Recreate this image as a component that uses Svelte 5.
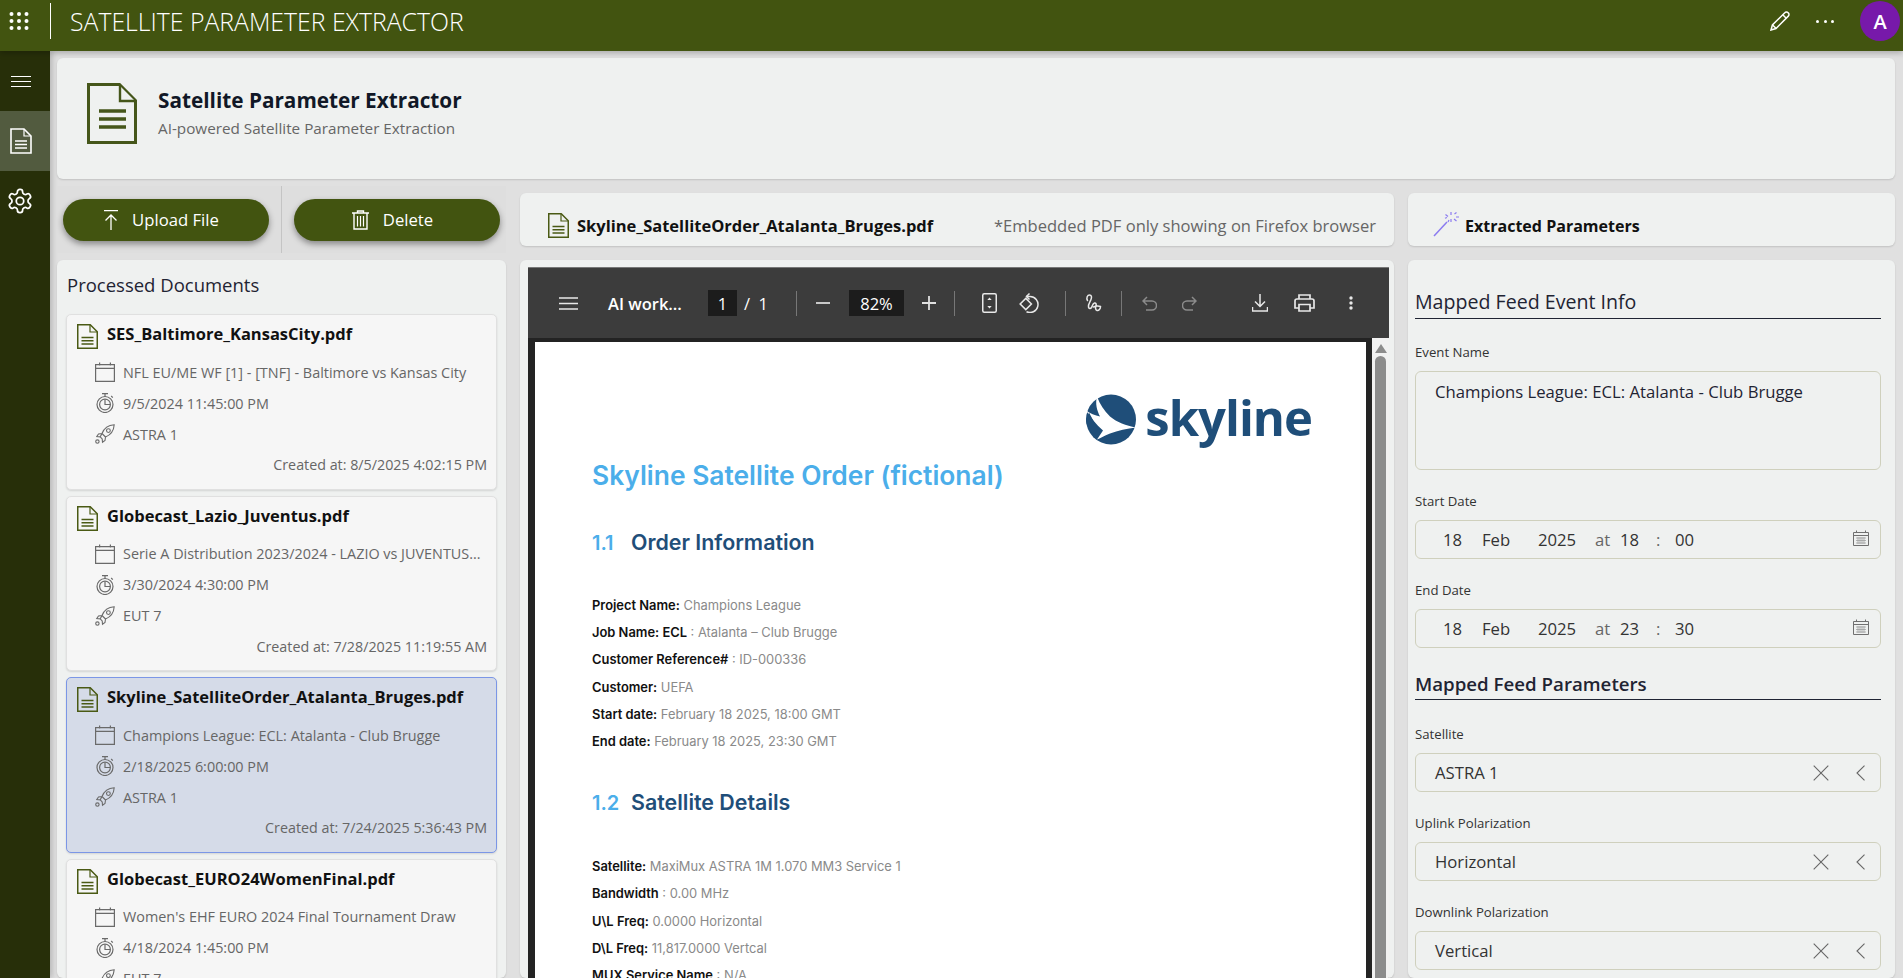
<script>
	const docs = [
		{ name: 'SES_Baltimore_KansasCity.pdf', event: 'NFL EU/ME WF [1] - [TNF] - Baltimore vs Kansas City', start: '9/5/2024 11:45:00 PM', sat: 'ASTRA 1', created: '8/5/2025 4:02:15 PM' },
		{ name: 'Globecast_Lazio_Juventus.pdf', event: 'Serie A Distribution 2023/2024 - LAZIO vs JUVENTUS...', start: '3/30/2024 4:30:00 PM', sat: 'EUT 7', created: '7/28/2025 11:19:55 AM' },
		{ name: 'Skyline_SatelliteOrder_Atalanta_Bruges.pdf', event: 'Champions League: ECL: Atalanta - Club Brugge', start: '2/18/2025 6:00:00 PM', sat: 'ASTRA 1', created: '7/24/2025 5:36:43 PM', selected: true },
		{ name: 'Globecast_EURO24WomenFinal.pdf', event: "Women's EHF EURO 2024 Final Tournament Draw", start: '4/18/2024 1:45:00 PM', sat: 'EUT 7' }
	];

	const orderInfo = [
		['Project Name:', 'Champions League'],
		['Job Name: ECL', ': Atalanta – Club Brugge'],
		['Customer Reference#', ': ID-000336'],
		['Customer:', 'UEFA'],
		['Start date:', 'February 18 2025, 18:00 GMT'],
		['End date:', 'February 18 2025, 23:30 GMT']
	];

	const satelliteDetails = [
		['Satellite:', 'MaxiMux ASTRA 1M 1.070 MM3 Service 1'],
		['Bandwidth', ': 0.00 MHz'],
		['U\\L Freq:', '0.0000 Horizontal'],
		['D\\L Freq:', '11,817.0000 Vertcal'],
		['MUX Service Name', ': N/A']
	];

	const startDate = { hour: '18', minute: '00' };
	const endDate = { hour: '23', minute: '30' };
	const selects = [
		{ label: 'Satellite', value: 'ASTRA 1' },
		{ label: 'Uplink Polarization', value: 'Horizontal' },
		{ label: 'Downlink Polarization', value: 'Vertical' }
	];
</script>

{#snippet fileIcon(cls)}
	<svg class={cls} viewBox="0 0 21 25" fill="none" stroke="currentColor">
		<path d="M.75.75h12.500l7 7v16.500H.75z" stroke-width="1.500" />
		<path d="M13 1v7h7" stroke-width="1.200" />
		<path d="M4.500 13.500h12M4.500 16.800h12M4.500 20h12" stroke-width="1.500" />
	</svg>
{/snippet}

{#snippet dateField(d)}
	<div class="field date">
		<span class="seg w-day">18</span>
		<span class="seg w-mon">Feb</span>
		<span class="seg w-year">2025</span>
		<span class="seg w-at">at</span>
		<span class="seg w-hour">{d.hour}</span>
		<span class="seg w-colon">:</span>
		<span class="seg">{d.minute}</span>
		<svg class="cal" viewBox="0 0 16 16" fill="none" stroke="#707070">
			<path d="M.5 2.500h15v13H.5zM.5 5.500h15M3.500 .5v2M12.500 .5v2" />
			<path d="M3 8h10M3 10.500h10M3 13h10M5 7v7M7 7v7M9 7v7M11 7v7" stroke-width=".7" stroke="#999" />
		</svg>
	</div>
{/snippet}

<div class="app">
	<header class="topbar">
		<svg class="waffle" viewBox="0 0 20 18" fill="#fff">
			{#each [2, 9, 16] as y}
				{#each [2.5, 10, 17.5] as x}
					<circle cx={x} cy={y} r="2" />
				{/each}
			{/each}
		</svg>
		<span class="topbar-sep"></span>
		<span class="app-name">SATELLITE PARAMETER EXTRACTOR</span>
		<svg class="pencil" viewBox="0 0 20 20" fill="none" stroke="#fff" stroke-width="1.500">
			<path d="M1 19l1.400-5L14.800 1.700a2.200 2.200 0 0 1 3.300 0l.2.2a2.200 2.200 0 0 1 0 3.200L6 17.500z" />
			<path d="M12.800 3.800l3.400 3.400M2.600 14l3.300 3.300" />
		</svg>
		<span class="more"><i></i><i></i><i></i></span>
		<span class="avatar">A</span>
	</header>

	<div class="body">
		<nav class="sidebar">
			<div class="nav-item menu">
				<svg width="20" height="11" viewBox="0 0 20 11" stroke="#fff"><path d="M0 .5h20M0 5.500h20M0 10.500h20" /></svg>
			</div>
			<div class="nav-item active">
				<svg width="22" height="26" viewBox="0 0 22 26" fill="none" stroke="#fff">
					<path d="M1 1h13l7 7v17H1z" stroke-width="1.600" />
					<path d="M14 1v7h7" stroke-width="1.200" />
					<path d="M5 13h12M5 16.500h12M5 20h12" stroke-width="1.500" />
				</svg>
			</div>
			<div class="nav-item gear">
				<svg width="28" height="28" viewBox="0 0 24 24" fill="none" stroke="#fff" stroke-width="1.500">
					<path d="M12.220 2h-.44a2 2 0 0 0-2 2v.18a2 2 0 0 1-1 1.730l-.43.25a2 2 0 0 1-2 0l-.15-.08a2 2 0 0 0-2.730.73l-.22.38a2 2 0 0 0 .73 2.730l.15.1a2 2 0 0 1 1 1.720v.51a2 2 0 0 1-1 1.740l-.15.09a2 2 0 0 0-.73 2.730l.22.38a2 2 0 0 0 2.730.73l.15-.08a2 2 0 0 1 2 0l.43.25a2 2 0 0 1 1 1.730V20a2 2 0 0 0 2 2h.44a2 2 0 0 0 2-2v-.18a2 2 0 0 1 1-1.730l.43-.25a2 2 0 0 1 2 0l.15.08a2 2 0 0 0 2.730-.73l.22-.39a2 2 0 0 0-.73-2.730l-.15-.08a2 2 0 0 1-1-1.740v-.5a2 2 0 0 1 1-1.740l.15-.09a2 2 0 0 0 .73-2.730l-.22-.38a2 2 0 0 0-2.730-.73l-.15.08a2 2 0 0 1-2 0l-.43-.25a2 2 0 0 1-1-1.730V4a2 2 0 0 0-2-2z" />
					<circle cx="12" cy="12" r="3.200" />
				</svg>
			</div>
		</nav>

		<main class="content">
			<section class="card hero">
				<svg class="hero-icon" viewBox="0 0 50 61" fill="none" stroke="#45561a">
					<path d="M1.500 1.500h31l16 16v42h-47z" stroke-width="3" />
					<path d="M33 3v15h15" stroke-width="2.400" fill="#eff1f0" />
					<path d="M12 28h27M12 36h27M12 44h27" stroke-width="3.400" />
				</svg>
				<div>
					<h1>Satellite Parameter Extractor</h1>
					<p>AI-powered Satellite Parameter Extraction</p>
				</div>
			</section>

			<div class="columns">
				<div class="col left">
					<div class="actions">
						<button class="pill">
							<svg width="14" height="20" viewBox="0 0 14 20" fill="none" stroke="#fff" stroke-width="1.300"><path d="M0 .7h14M7 20V5M1.500 10.500L7 5l5.500 5.500" /></svg>
							Upload File
						</button>
						<span class="action-sep"></span>
						<button class="pill">
							<svg width="17" height="20" viewBox="0 0 17 20" fill="none" stroke="#fff" stroke-width="1.400"><path d="M0 3h17M5.500 3V1h6v2M2 3v16h13V3" /><path d="M5.500 6v10.500M8.500 6v10.500M11.500 6v10.500" stroke-width="1.200" /></svg>
							Delete
						</button>
					</div>
					<section class="card docs">
						<h2>Processed Documents</h2>
						<div class="doc-list">
							{#each docs as doc}
								<article class="doc" class:selected={doc.selected}>
									<div class="doc-title">
										{@render fileIcon('file-sm')}
										<span>{doc.name}</span>
									</div>
									<div class="doc-row">
										<svg class="row-icon" viewBox="0 0 20 20" fill="none" stroke="#6a6a6a" stroke-width="1.200"><path d="M.6 2.600h18.800v16.800H.6zM.6 6.400h18.800M4.600 .4v3M15.400 .4v3" /></svg>
										<span>{doc.event}</span>
									</div>
									<div class="doc-row">
										<svg class="row-icon" viewBox="0 0 20 20" fill="none" stroke="#6a6a6a" stroke-width="1.200"><circle cx="10" cy="11.500" r="8" /><circle cx="10" cy="11.500" r="5.400" /><path d="M10 6.500v5h5M7 .7h6M10 .7v3M16.200 3l1.600 1.600" /></svg>
										<span>{doc.start}</span>
									</div>
									<div class="doc-row">
										<svg class="row-icon" viewBox="0 0 20 20" fill="none" stroke="#6a6a6a" stroke-width="1.100"><path d="M7 9.500C9 4.500 13 1.200 19.200.8c-.4 6.200-3.700 10.200-8.700 12.200zM7 9.500L3.500 10 1.800 12.500l3.400.3zM10.500 13l-.5 3.500-2.500 1.700-.3-3.400M5.200 12.800l2 2" /><circle cx="13.400" cy="6.600" r="1.900" /><circle cx="2.400" cy="17.600" r="1.700" /></svg>
										<span>{doc.sat}</span>
									</div>
									{#if doc.created}
										<div class="doc-created">Created at: {doc.created}</div>
									{/if}
								</article>
							{/each}
						</div>
					</section>
				</div>

				<div class="col middle">
					<section class="card strip">
						{@render fileIcon('file-sm')}
						<strong>Skyline_SatelliteOrder_Atalanta_Bruges.pdf</strong>
						<span class="note">*Embedded PDF only showing on Firefox browser</span>
					</section>
					<section class="card viewer">
						<div class="pdf-toolbar">
							<svg class="t-menu" width="19" height="13" viewBox="0 0 19 13" stroke="#e8e8e8" stroke-width="1.600"><path d="M0 1h19M0 6.500h19M0 12h19" /></svg>
							<span class="pdf-title">AI work...</span>
							<span class="pdf-box page">1</span>
							<span class="pdf-of">/&nbsp;&nbsp;1</span>
							<i class="t-sep s1"></i>
							<svg class="t-minus" width="14" height="2" viewBox="0 0 14 2" stroke="#c8c8c8" stroke-width="2"><path d="M0 1h14" /></svg>
							<span class="pdf-box zoom">82%</span>
							<svg class="t-plus" width="14" height="14" viewBox="0 0 14 14" stroke="#e0e0e0" stroke-width="1.800"><path d="M0 7h14M7 0v14" /></svg>
							<i class="t-sep s2"></i>
							<svg class="t-fit" width="15" height="20" viewBox="0 0 15 20" fill="none" stroke="#e8e8e8" stroke-width="1.500"><rect x=".75" y=".75" width="13.500" height="18.500" rx="1.500" /><path d="M7.500 4.500l-2.200 2.500h4.400zM7.500 15.500l-2.200-2.500h4.400z" fill="#e8e8e8" stroke="none" /></svg>
							<svg class="t-rotate" width="21" height="20" viewBox="0 0 21 20" fill="none" stroke="#e8e8e8" stroke-width="1.500"><path d="M7 3.500h4a8 8 0 1 1-3.500 15.200" /><path d="M10.500.5L7.500 3.500l3 3" /><rect x="2.800" y="7" width="8" height="8" transform="rotate(45 6.800 11)" /></svg>
							<i class="t-sep s3"></i>
							<svg class="t-draw" width="18" height="18" viewBox="0 0 18 18" fill="none" stroke="#e8e8e8" stroke-width="1.500" stroke-linecap="round"><path d="M2.500 6.500C1 4 2.500 1 4.500 1S7 3 6 5.500 3 10.500 3.500 13c.4 1.800 2 2 3 .5s1-4 3-4.500c1.500-.3 2 1 1.500 2.500s-1 4.500 1 5c1.800.4 3.500-1.500 3.500-4-2-.8-5-.5-7 .5" /></svg>
							<i class="t-sep s4"></i>
							<svg class="t-undo" width="15" height="15" viewBox="0 0 15 15" fill="none" stroke="#8b8b8b" stroke-width="1.500"><path d="M5 1L1 5l4 4M1 5h9a4 4 0 0 1 0 9H4" /></svg>
							<svg class="t-redo" width="15" height="15" viewBox="0 0 15 15" fill="none" stroke="#8b8b8b" stroke-width="1.500"><path d="M10 1l4 4-4 4M14 5H5a4 4 0 0 0 0 9h6" /></svg>
							<svg class="t-down" width="16" height="18" viewBox="0 0 16 18" fill="none" stroke="#e8e8e8" stroke-width="1.500"><path d="M8 0v12M3 7.500l5 5 5-5M.5 13v4h15v-4" /></svg>
							<svg class="t-print" width="21" height="18" viewBox="0 0 21 18" fill="none" stroke="#e8e8e8" stroke-width="1.700"><path d="M5 5V1h11v4M5 14H1V7a2 2 0 0 1 2-2h15a2 2 0 0 1 2 2v7h-4" /><path d="M5 10.500h11v6.500H5z" /></svg>
							<svg class="t-dots" width="4" height="14" viewBox="0 0 4 14" fill="#e8e8e8"><circle cx="2" cy="2" r="1.700" /><circle cx="2" cy="7" r="1.700" /><circle cx="2" cy="12" r="1.700" /></svg>
						</div>
						<div class="pdf-body">
							<div class="page-sheet">
								<div class="logo">
									<svg width="50" height="51" viewBox="0 0 50 50">
										<circle cx="25" cy="25" r="25" fill="#1f4e79" />
										<path d="M11 2c3 8 7 14 13 20 7 6 16 9 26 11-9 1-18 3-26 6-6 2-10 5-13 6l6-9C10 30 4 22 0 16c4 3 9 5 14 6C11 16 9 9 11 2z" fill="#fff" />
										<path d="M3 18l9 17-4 5C3 35 0 30 0 25z" fill="#1f4e79" />
									</svg>
									<span>skyline</span>
								</div>
								<h3 class="pdf-h1">Skyline Satellite Order (fictional)</h3>
								<h4 class="pdf-h2 first"><span>1.1</span>Order Information</h4>
								{#each orderInfo as row}
									<p class="pdf-line"><b>{row[0]}</b> {row[1]}</p>
								{/each}
								<h4 class="pdf-h2 second"><span>1.2</span>Satellite Details</h4>
								{#each satelliteDetails as row}
									<p class="pdf-line"><b>{row[0]}</b> {row[1]}</p>
								{/each}
							</div>
							<div class="pdf-scroll">
								<i class="arrow"></i>
								<i class="thumb"></i>
							</div>
						</div>
					</section>
				</div>

				<div class="col right">
					<section class="card strip params">
						<svg class="wand" width="27" height="26" viewBox="0 0 27 26" fill="none" stroke="#8b7bf0" stroke-width="1.200">
							<path d="M1 25L14 11" stroke-width="1.500" />
							<path d="M18 1v3M18 8v3M12.500 3.500l2.500 2M21 8l2.500 2M26 6h-3M14 6.500l-2 .8M21.500 3l2-1.500M16 9l-1 2" />
						</svg>
						<strong>Extracted Parameters</strong>
					</section>
					<section class="card form">
						<h3 class="form-head first">Mapped Feed Event Info</h3>
						<div class="label">Event Name</div>
						<div class="field area">Champions League: ECL: Atalanta - Club Brugge</div>
						<div class="label">Start Date</div>
						{@render dateField(startDate)}
						<div class="label">End Date</div>
						{@render dateField(endDate)}
						<h3 class="form-head bold">Mapped Feed Parameters</h3>
						{#each selects as s}
							<div class="label">{s.label}</div>
							<div class="field select">
								<span>{s.value}</span>
								<svg class="x" width="16" height="16" viewBox="0 0 16 16" stroke="#666" stroke-width="1.100"><path d="M.7 .7l14.600 14.600M15.300 .7L.7 15.300" /></svg>
								<svg class="chev" width="9" height="16" viewBox="0 0 9 16" fill="none" stroke="#666" stroke-width="1.100"><path d="M8.500 .7L1 8l7.500 7.300" /></svg>
							</div>
						{/each}
					</section>
				</div>
			</div>
		</main>
	</div>
</div>

<style>
	:global(body) {
		margin: 0;
		background: #e0e0e0;
		overflow: hidden;
	}

	.app {
		width: 1903px;
		height: 978px;
		overflow: hidden;
		display: flex;
		flex-direction: column;
		font-family: 'Open Sans', 'Noto Sans', sans-serif;
		color: #1a1a1a;
	}

	.topbar {
		height: 51px;
		flex: none;
		background: #425410;
		display: flex;
		align-items: flex-start;
		padding-right: 3px;
		box-sizing: border-box;
		position: relative;
		z-index: 2;
		box-shadow: 0 2px 6px rgba(0, 0, 0, 0.25);
	}

	.waffle {
		width: 20px;
		height: 18px;
		margin: 12px 0 0 9px;
	}

	.topbar-sep {
		width: 1px;
		height: 36px;
		background: #fff;
		margin: 3px 0 0 21px;
	}

	.app-name {
		margin: 7px 0 0 19px;
		font-size: 24.800px;
		line-height: 28px;
		font-weight: 300;
		color: #fff;
		flex: 1;
	}

	.pencil {
		width: 20px;
		height: 20px;
		margin-top: 11px;
	}

	.more {
		display: flex;
		gap: 4.500px;
		margin: 20px 0 0 26px;
	}

	.more i {
		width: 3px;
		height: 3px;
		background: #fff;
		border-radius: 50%;
	}

	.avatar {
		width: 40px;
		height: 40px;
		border-radius: 50%;
		background: #7719aa;
		color: #fff;
		font-size: 20px;
		font-weight: 600;
		display: flex;
		align-items: center;
		justify-content: center;
		margin: 1px 0 0 26px;
	}

	.body {
		flex: 1;
		display: flex;
		min-height: 0;
	}

	.sidebar {
		width: 50px;
		flex: none;
		background: #272f09;
		box-shadow: 2px 0 6px rgba(0, 0, 0, 0.2);
	}

	.nav-item {
		height: 60px;
		display: flex;
		align-items: center;
		justify-content: center;
		box-sizing: border-box;
	}

	.menu {
		padding-right: 8px;
	}

	.active {
		background: #525b3f;
		padding-right: 8px;
	}

	.gear {
		padding-right: 11px;
	}

	.content {
		flex: 1;
		min-width: 0;
		padding: 7px 8px 0 7px;
	}

	.card {
		background: #eff1f0;
		border-radius: 6px;
		box-shadow: 0 1px 2px rgba(0, 0, 0, 0.14);
	}

	.hero {
		height: 121px;
		display: flex;
		align-items: flex-start;
		padding: 25px 0 0 30px;
		box-sizing: border-box;
		gap: 21px;
	}

	.hero-icon {
		width: 50px;
		height: 61px;
		flex: none;
	}

	h1 {
		margin: 4px 0 0;
		font-size: 20.750px;
		line-height: 27px;
		font-weight: 700;
		color: #111827;
	}

	.hero p {
		margin: 4px 0 0;
		font-size: 15.250px;
		line-height: 20px;
		color: #666;
	}

	.columns {
		display: grid;
		grid-template-columns: 449px 874px 487px;
		column-gap: 14px;
		height: 799px;
	}

	.col {
		display: flex;
		flex-direction: column;
		min-width: 0;
		min-height: 0;
	}

	.actions {
		height: 67px;
		margin: 7px 0 7px;
		display: flex;
		align-items: center;
		padding: 0 6px;
		flex: none;
		background: #dedede;
	}

	.pill {
		width: 206px;
		height: 42px;
		border: 0;
		border-radius: 21px;
		background: #425410;
		color: #fff;
		font: 400 16.700px 'Open Sans', sans-serif;
		display: flex;
		align-items: center;
		justify-content: center;
		gap: 14px;
		box-shadow: 0 3px 6px rgba(0, 0, 0, 0.4);
		padding: 0 9px 0 0;
	}

	.action-sep {
		width: 1px;
		height: 67px;
		background: #c4c4c4;
		margin: 0 12px;
	}

	.docs {
		flex: 1;
		padding: 0 9px;
		min-height: 0;
		overflow: hidden;
	}

	h2 {
		margin: 12px 0 0 1px;
		font-size: 18.500px;
		line-height: 26px;
		font-weight: 400;
		color: #1f2433;
	}

	.doc-list {
		display: flex;
		flex-direction: column;
		gap: 6px;
		margin-top: 16px;
	}

	.doc {
		height: 175.500px;
		box-sizing: border-box;
		background: #f6f6f6;
		border: 1px solid #e0e0e0;
		border-radius: 5px;
		box-shadow: 0 1px 2px rgba(0, 0, 0, 0.12);
		padding: 9px 9px 0 10px;
		flex: none;
	}

	.doc.selected {
		background: #d5dbe8;
		border-color: #7b96e6;
	}

	.doc-title {
		display: flex;
		align-items: flex-start;
		gap: 9px;
		height: 32.500px;
		font-size: 16.500px;
		line-height: 20px;
		font-weight: 700;
		color: #111;
		white-space: nowrap;
	}

	:global(.file-sm) {
		width: 21px;
		height: 25px;
		flex: none;
		color: #4a5a14;
	}

	.doc-row {
		height: 31px;
		display: flex;
		align-items: center;
		gap: 8px;
		padding-left: 18px;
		font-size: 14.400px;
		color: #666;
		white-space: nowrap;
	}

	.row-icon {
		width: 20px;
		height: 20px;
		flex: none;
	}

	.doc-created {
		margin-top: 5.500px;
		text-align: right;
		font-size: 14.300px;
		line-height: 20px;
		color: #666;
	}

	.strip {
		height: 53px;
		margin-top: 14px;
		flex: none;
		display: flex;
		align-items: center;
		padding: 12px 0 0 28px;
		box-sizing: border-box;
		gap: 8px;
	}

	.strip strong {
		font-size: 16.500px;
		font-weight: 700;
		color: #111;
		white-space: nowrap;
	}

	.note {
		margin-left: auto;
		margin-right: 18px;
		font-size: 16.550px;
		color: #666;
		white-space: nowrap;
	}

	.viewer {
		flex: 1;
		margin-top: 14px;
		padding: 7px 5px 0 8px;
		min-height: 0;
		display: flex;
		flex-direction: column;
		overflow: hidden;
	}

	.pdf-toolbar {
		height: 71px;
		flex: none;
		background: #3c3c3c;
		border-top: 1px solid #777;
		box-sizing: border-box;
		display: flex;
		align-items: center;
		padding-left: 31px;
		color: #fff;
	}

	.pdf-title {
		margin-left: 30px;
		width: 100px;
		font-size: 16.500px;
		font-weight: 600;
		white-space: nowrap;
	}

	.pdf-box {
		background: #1c1c1c;
		height: 26px;
		display: flex;
		align-items: center;
		justify-content: center;
		font-size: 16.500px;
	}

	.page {
		width: 29px;
	}

	.pdf-of {
		margin-left: 7px;
		width: 52px;
		font-size: 16.500px;
	}

	.zoom {
		width: 55px;
		margin-left: 19px;
	}

	.t-sep {
		width: 1px;
		height: 25px;
		background: #777;
		flex: none;
	}

	.t-minus {
		margin-left: 19px;
	}

	.t-plus {
		margin-left: 18px;
	}

	.s2 {
		margin-left: 18px;
	}

	.t-fit {
		margin-left: 27px;
	}

	.t-rotate {
		margin-left: 22px;
	}

	.s3 {
		margin-left: 25px;
	}

	.t-draw {
		margin-left: 19px;
	}

	.s4 {
		margin-left: 18px;
	}

	.t-undo {
		margin-left: 20px;
	}

	.t-redo {
		margin-left: 25px;
	}

	.t-down {
		margin-left: 55px;
	}

	.t-print {
		margin-left: 26px;
	}

	.t-dots {
		margin-left: 34px;
	}

	.pdf-body {
		flex: 1;
		min-height: 0;
		display: flex;
		background: #232323;
		padding-top: 4px;
	}

	.page-sheet {
		width: 831px;
		margin: 0 6px 0 7px;
		background: #fff;
		padding: 52px 0 0 57px;
		box-sizing: border-box;
		font-family: Inter, 'Open Sans', sans-serif;
	}

	.logo {
		display: flex;
		justify-content: flex-end;
		align-items: center;
		gap: 9px;
		padding-right: 54px;
		height: 51px;
		color: #1f4e79;
		font: 700 49px/51px 'Open Sans', sans-serif;
		letter-spacing: -1px;
	}

	.logo span {
		margin-top: -4px;
	}

	.pdf-h1 {
		margin: 14px 0 0;
		font-size: 26.400px;
		line-height: 32px;
		font-weight: 600;
		color: #4baeea;
	}

	.pdf-h2 {
		margin: 0;
		font-size: 21.400px;
		line-height: 26px;
		font-weight: 600;
		color: #1f4e79;
	}

	.pdf-h2 span {
		display: inline-block;
		width: 39px;
		font-size: 20px;
		color: #4baeea;
	}

	.pdf-h2.first {
		margin: 38px 0 36px;
	}

	.pdf-h2.second {
		margin: 34px 0 37px;
	}

	.pdf-line {
		margin: 0;
		height: 27.200px;
		font-size: 12.900px;
		line-height: 27.200px;
		color: #8a8a8a;
		white-space: pre;
	}

	.pdf-line b {
		color: #111;
		font-weight: 600;
	}

	.pdf-scroll {
		flex: 1;
		background: #f1f1f1;
		margin-top: -4px;
		position: relative;
		display: flex;
		flex-direction: column;
		align-items: center;
	}

	.arrow {
		width: 0;
		height: 0;
		border-left: 6px solid transparent;
		border-right: 6px solid transparent;
		border-bottom: 9px solid #8c8c8c;
		margin-top: 6px;
	}

	.thumb {
		width: 11px;
		flex: 1;
		margin-top: 3px;
		background: #8c8c8c;
		border-radius: 6px 6px 0 0;
	}

	.params {
		padding-left: 25px;
		gap: 5px;
	}

	.params strong {
		font-size: 16.050px;
	}

	.wand {
		flex: none;
		margin-top: -3px;
	}

	.form {
		flex: 1;
		margin-top: 14px;
		padding: 0 14px 0 7px;
		min-height: 0;
		overflow: hidden;
	}

	.form-head {
		margin: 0;
		height: 31px;
		line-height: 29px;
		font-size: 19.600px;
		font-weight: 500;
		color: #1f2433;
		border-bottom: 1px solid #1f2433;
		box-sizing: border-box;
		white-space: nowrap;
	}

	.form-head.first {
		margin-top: 27px;
		height: 32px;
		line-height: 30px;
	}

	.form-head.bold {
		margin-top: 21px;
		font-weight: 600;
		font-size: 18.700px;
		height: 31px;
	}

	.label {
		margin-top: 21px;
		height: 20px;
		line-height: 20px;
		font-size: 13.200px;
		color: #333;
		margin-bottom: 9px;
	}

	.form-head.first + .label {
		margin-top: 23px;
	}

	.form-head + .label {
		margin-top: 24px;
	}

	.field {
		border: 1px solid #cfd0bd;
		border-radius: 6px;
		box-sizing: border-box;
		height: 39px;
		font-size: 16.700px;
		color: #333;
		display: flex;
		align-items: center;
	}

	.area {
		height: 99px;
		align-items: flex-start;
		padding: 8px 0 0 19px;
		line-height: 24px;
		color: #1f2433;
	}

	.date {
		padding-left: 27px;
	}

	.seg {
		display: block;
		white-space: pre;
	}

	.w-day {
		width: 39px;
	}

	.w-mon {
		width: 56px;
	}

	.w-year {
		width: 57px;
	}

	.w-at {
		width: 25px;
		color: #666;
	}

	.w-hour {
		width: 36px;
	}

	.w-colon {
		width: 19px;
		color: #666;
	}

	.cal {
		width: 16px;
		height: 16px;
		margin: -4px 11px 0 auto;
	}

	.select {
		padding-left: 19px;
	}

	.select span {
		flex: 1;
	}

	.x {
		margin-right: 27px;
	}

	.chev {
		margin-right: 15px;
	}
</style>
